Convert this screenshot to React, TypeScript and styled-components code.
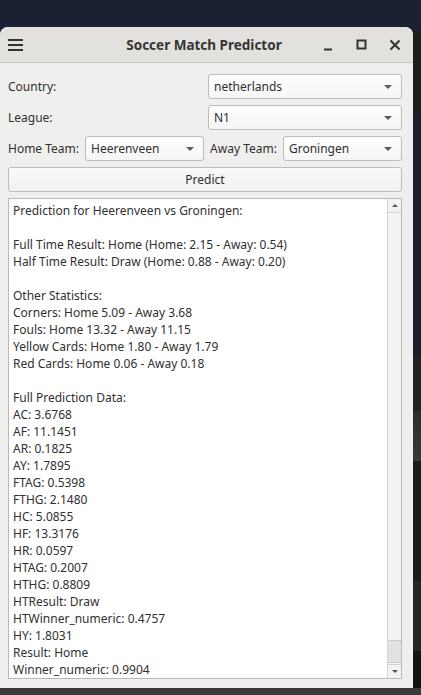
import React from 'react';
import styled, { createGlobalStyle } from 'styled-components';

const GlobalStyle = createGlobalStyle`
  html, body {
    margin: 0;
    padding: 0;
    background: #1b2133;
    overflow: hidden;
  }
  * {
    box-sizing: border-box;
  }
`;

const Desktop = styled.div`
  width: 421px;
  height: 695px;
  display: flex;
  flex-direction: column;
  background: #1b2133;
  font-family: 'Noto Sans', 'DejaVu Sans', sans-serif;
`;

const TopSpace = styled.div`
  height: 27px;
  flex-shrink: 0;
`;

const Middle = styled.div`
  display: flex;
  height: 661px;
`;

const SideStrip = styled.div`
  flex: 1;
  margin-top: 4px;
  background: linear-gradient(
    to bottom,
    #1d1d1e 0px,
    #1d1d1e 80px,
    #1a1f2c 80px,
    #1a1f2c 325px,
    #222 325px,
    #222 380px,
    #2c2c2c 380px,
    #393939 430px,
    #1c1c1c 430px,
    #1c1c1c 550px,
    #262626 550px,
    #262626 620px,
    #121212 620px
  );
`;

const BottomStrip = styled.div`
  height: 7px;
  background: #3a3a3a;
`;

const Window = styled.div`
  width: 413px;
  display: flex;
  flex-direction: column;
  background: #efefed;
  border-radius: 8px 8px 0 0;
  overflow: hidden;
`;

const TitleBar = styled.div`
  height: 36px;
  flex-shrink: 0;
  display: flex;
  align-items: center;
  padding: 0 12px 0 8px;
  background: #e2e1dd;
  border-bottom: 1px solid #c9c8c4;
  color: #333;
`;

const Title = styled.div`
  flex: 1;
  text-align: center;
  font-weight: bold;
  font-size: 13.5px;
  padding-left: 62px;
  color: #353535;
`;

const WinButtons = styled.div`
  display: flex;
  align-items: center;
  gap: 21px;
`;

const Content = styled.div`
  flex: 1;
  min-height: 0;
  display: flex;
  flex-direction: column;
  gap: 6px;
  padding: 11px 11px 9px 8px;
  font-size: 12px;
  color: #2f2f2f;
`;

const FormRow = styled.div`
  display: grid;
  grid-template-columns: 200px 1fr;
  align-items: center;
  height: 25px;
`;

const TeamRow = styled.div`
  display: grid;
  grid-template-columns: auto 1fr auto 1fr;
  align-items: center;
  gap: 6px;
  height: 25px;
`;

const Label = styled.span`
  white-space: nowrap;
  color: #2f2f2f;
`;

const Combo = styled.div`
  flex: 1;
  height: 25px;
  display: flex;
  align-items: center;
  justify-content: space-between;
  padding: 0 9px 0 5px;
  background: linear-gradient(#fdfdfd, #f6f6f5);
  border: 1px solid #bcbcba;
  border-radius: 3px;
  color: #2f2f2f;
`;

const Arrow = styled.span`
  width: 0;
  height: 0;
  border-left: 4px solid transparent;
  border-right: 4px solid transparent;
  border-top: 4px solid #5a5a5a;
`;

const PredictButton = styled.div`
  height: 25px;
  flex-shrink: 0;
  display: flex;
  align-items: center;
  justify-content: center;
  background: linear-gradient(#f9f9f8, #f1f1f0);
  border: 1px solid #bdbdbb;
  border-radius: 3px;
  color: #2f2f2f;
`;

const TextArea = styled.div`
  flex: 1;
  min-height: 0;
  display: flex;
  background: #fff;
  border: 1px solid #b9b9b7;
`;

const TextBody = styled.div`
  flex: 1;
  overflow: hidden;
  padding: 3px 4px;
  line-height: 17px;
  white-space: pre;
  color: #303030;
`;

const ScrollBar = styled.div`
  width: 14px;
  display: flex;
  flex-direction: column;
  background: #f3f3f2;
  border-left: 1px solid #d4d4d2;
`;

const ScrollArrow = styled.div<{ $up?: boolean }>`
  height: 14px;
  display: flex;
  align-items: center;
  justify-content: center;
  border-${(p) => (p.$up ? 'bottom' : 'top')}: 1px solid #d4d4d2;

  &::after {
    content: '';
    border-left: 3px solid transparent;
    border-right: 3px solid transparent;
    border-${(p) => (p.$up ? 'bottom' : 'top')}: 3px solid #555;
  }
`;

const Track = styled.div`
  flex: 1;
  display: flex;
  flex-direction: column;
  justify-content: flex-end;
`;

const Thumb = styled.div`
  height: 23px;
  margin-bottom: 1px;
  background: #e2e2e0;
  border-top: 1px solid #cdcdcb;
  border-bottom: 1px solid #cdcdcb;
`;

const lines = [
  'Prediction for Heerenveen vs Groningen:',
  '',
  'Full Time Result: Home (Home: 2.15 - Away: 0.54)',
  'Half Time Result: Draw (Home: 0.88 - Away: 0.20)',
  '',
  'Other Statistics:',
  'Corners: Home 5.09 - Away 3.68',
  'Fouls: Home 13.32 - Away 11.15',
  'Yellow Cards: Home 1.80 - Away 1.79',
  'Red Cards: Home 0.06 - Away 0.18',
  '',
  'Full Prediction Data:',
  'AC: 3.6768',
  'AF: 11.1451',
  'AR: 0.1825',
  'AY: 1.7895',
  'FTAG: 0.5398',
  'FTHG: 2.1480',
  'HC: 5.0855',
  'HF: 13.3176',
  'HR: 0.0597',
  'HTAG: 0.2007',
  'HTHG: 0.8809',
  'HTResult: Draw',
  'HTWinner_numeric: 0.4757',
  'HY: 1.8031',
  'Result: Home',
  'Winner_numeric: 0.9904',
];

const MenuIcon = () => (
  <svg width="15" height="14" viewBox="0 0 15 14">
    <path d="M0 2h15M0 7h15M0 12h15" stroke="#333" strokeWidth="2" />
  </svg>
);

const MinIcon = () => (
  <svg width="12" height="12" viewBox="0 0 12 12">
    <path d="M1 10.5h8" stroke="#333" strokeWidth="2" />
  </svg>
);

const MaxIcon = () => (
  <svg width="12" height="12" viewBox="0 0 12 12">
    <rect x="1.5" y="1.5" width="8" height="8" fill="none" stroke="#333" strokeWidth="2" />
  </svg>
);

const CloseIcon = () => (
  <svg width="12" height="12" viewBox="0 0 12 12">
    <path d="M1.5 1.5l9 9M10.5 1.5l-9 9" stroke="#333" strokeWidth="2" />
  </svg>
);

export default function App() {
  return (
    <>
      <GlobalStyle />
      <Desktop>
        <TopSpace />
        <Middle>
          <Window>
            <TitleBar>
              <MenuIcon />
              <Title>Soccer Match Predictor</Title>
              <WinButtons>
                <MinIcon />
                <MaxIcon />
                <CloseIcon />
              </WinButtons>
            </TitleBar>
            <Content>
              <FormRow>
                <Label>Country:</Label>
                <Combo>
                  netherlands
                  <Arrow />
                </Combo>
              </FormRow>
              <FormRow>
                <Label>League:</Label>
                <Combo>
                  N1
                  <Arrow />
                </Combo>
              </FormRow>
              <TeamRow>
                <Label>Home Team:</Label>
                <Combo>
                  Heerenveen
                  <Arrow />
                </Combo>
                <Label>Away Team:</Label>
                <Combo>
                  Groningen
                  <Arrow />
                </Combo>
              </TeamRow>
              <PredictButton>Predict</PredictButton>
              <TextArea>
                <TextBody>{lines.join('\n')}</TextBody>
                <ScrollBar>
                  <ScrollArrow $up />
                  <Track>
                    <Thumb />
                  </Track>
                  <ScrollArrow />
                </ScrollBar>
              </TextArea>
            </Content>
          </Window>
          <SideStrip />
        </Middle>
        <BottomStrip />
      </Desktop>
    </>
  );
}
